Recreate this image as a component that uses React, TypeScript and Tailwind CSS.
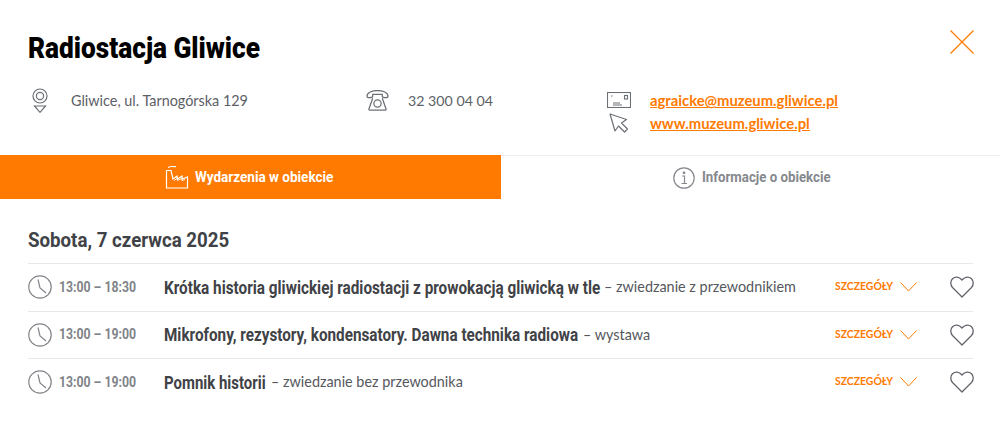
import React from "react";

const heading = "font-['Roboto',sans-serif] font-bold";
const body = "font-['Lato','Noto_Sans',sans-serif]";

const events = [
  { time: "13:00 – 18:30", title: "Krótka historia gliwickiej radiostacji z prowokacją gliwicką w tle", note: "– zwiedzanie z przewodnikiem", box: "w-[440px]", squeeze: "scale-x-[.85]" },
  { time: "13:00 – 19:00", title: "Mikrofony, rezystory, kondensatory. Dawna technika radiowa", note: "– wystawa", box: "w-[419px]", squeeze: "scale-x-[.848]" },
  { time: "13:00 – 19:00", title: "Pomnik historii", note: "– zwiedzanie bez przewodnika", box: "w-[107px]", squeeze: "scale-x-[.83]" },
];

const PinIcon = () => (
  <svg width="16" height="25" viewBox="0 0 16 25" fill="none" stroke="#6b6f76" strokeWidth="1.2">
    <circle cx="8" cy="8" r="7" />
    <circle cx="8" cy="8" r="3.6" />
    <path d="M2.500 18h11L8 24.300z" />
  </svg>
);

const PhoneIcon = () => (
  <svg width="23" height="21" viewBox="0 1.500 24 21.800" fill="none" stroke="#6b6f76" strokeWidth="1.3">
    <path d="M1 8c0-8 22-8 22 0 0 1-1 1.500-2.500 1.500S17 9 17 8V6H7v2c0 1-2 1.500-3.500 1.500S1 9 1 8z" />
    <path d="M7 10 3 21.500c0 .5.300 1 1 1h16c.7 0 1-.5 1-1L17 10" />
    <circle cx="12" cy="15.500" r="3.800" />
  </svg>
);

const MailIcon = () => (
  <svg width="24" height="16" viewBox="0 0 24 16" fill="none" stroke="#6b6f76" strokeWidth="1.1">
    <rect x=".5" y=".5" width="23" height="15" />
    <rect x="17.500" y="3.500" width="3" height="3.500" />
    <path d="M4 4h1.500M6 11h7M6 13h9" />
  </svg>
);

const CursorIcon = () => (
  <svg width="20" height="20" viewBox="0 0 20 20" fill="none" stroke="#6b6f76" strokeWidth="1.200">
    <path d="M1 1l5 17 3.500-5 6 6 3-3-6-6 5-3.500z" strokeLinejoin="round" />
  </svg>
);

const FactoryIcon = () => (
  <svg width="24" height="24" viewBox="0 0 24 24" fill="none" stroke="#fff" strokeWidth="1.200">
    <path d="M1.500 23V5.500h4.500l2 8.500 4-3 .5 3 4.500-3 .5 3 5-2V23z" />
    <path d="M3 2.500c3-1.800 5-.8 8-.8" />
    <path d="M9 15.500l3-2 .5 2 4-2 .5 2 3-1" strokeWidth=".9" />
  </svg>
);

const InfoIcon = () => (
  <svg width="22" height="22" viewBox="0 0 22 22" fill="none" stroke="#85888d" strokeWidth="1.200">
    <circle cx="11" cy="11" r="10.200" />
    <circle cx="11" cy="5.800" r=".8" fill="#85888d" />
    <path d="M9 9h2.500v7.500M8.500 16.500h5.500" />
  </svg>
);

const ClockIcon = () => (
  <svg width="24" height="24" viewBox="0 0 24 24" fill="none" stroke="#808388" strokeWidth="1.200">
    <circle cx="12" cy="12" r="11.200" />
    <path d="M10 4.500 12 13l6 5" />
  </svg>
);

const Chevron = () => (
  <svg width="17" height="10" viewBox="0 0 17 10" fill="none" stroke="#ff7a00" strokeWidth="1">
    <path d="M.5.500 8.500 9 16.500.5" />
  </svg>
);

const HeartIcon = () => (
  <svg width="24" height="22" viewBox="0 0 24 22" fill="none" stroke="#5f6369" strokeWidth="1.300">
    <path d="M12 21 2.500 11.500C.2 9 .2 5 2.500 2.800 5 .4 9 .4 12 4c3-3.600 7-3.600 9.500-1.200 2.300 2.200 2.300 6.200 0 8.700z" strokeLinejoin="round" />
  </svg>
);

const CloseIcon = () => (
  <svg width="24" height="24" viewBox="0 0 24 24" fill="none" stroke="#ff7a00" strokeWidth="1.200">
    <path d="M.5.500l23 23M23.500.500l-23 23" />
  </svg>
);

export default function App() {
  return (
    <main className={`w-[1000px] h-[448px] bg-white overflow-hidden ${body}`}>
      <header className="flex items-start justify-between pl-7 pr-[26px] pt-[30px] h-[70px]">
        <h1 className="text-[30px] leading-9 text-black whitespace-nowrap origin-left scale-x-[.875] font-['Roboto',sans-serif] font-black">Radiostacja Gliwice</h1>
        <button aria-label="Zamknij"><CloseIcon /></button>
      </header>

      <section className="flex pl-[31px] h-[85px] pt-[18px] text-[14.4px] text-[#5c6066]">
        <div className="flex items-start w-[335px]">
          <span className="ml-px"><PinIcon /></span>
          <span className="ml-[23px] pt-px leading-6">Gliwice, ul. Tarnogórska 129</span>
        </div>
        <div className="flex items-start w-[241px]">
          <span className="mt-[2px]"><PhoneIcon /></span>
          <span className="ml-[19px] pt-px text-[14.2px] leading-6">32 300 04 04</span>
        </div>
        <div className="flex flex-col text-[#ff7a00] text-[14.8px] underline font-bold">
          <a className="flex items-center h-6 gap-[19px]">
            <MailIcon />
            <span>agraicke@muzeum.gliwice.pl</span>
          </a>
          <a className="flex items-center h-[22px] gap-[19px]">
            <span className="w-6 flex justify-center"><CursorIcon /></span>
            <span>www.muzeum.gliwice.pl</span>
          </a>
        </div>
      </section>

      <nav className={`flex h-11 text-[15px] ${heading}`}>
        <div className="w-[501px] bg-[#ff7a00] text-white flex items-center pl-[165px] gap-[6px]">
          <FactoryIcon />
          <span className="whitespace-nowrap origin-left scale-x-[.9]">Wydarzenia w obiekcie</span>
        </div>
        <div className="flex-1 border-t border-[#eeeeee] text-[#85888d] flex items-center pl-[172px] gap-[7px]">
          <InfoIcon />
          <span className="whitespace-nowrap origin-left scale-x-[.883]">Informacje o obiekcie</span>
        </div>
      </nav>

      <section className="pl-7 pr-[27px]">
        <h2 className={`pt-[27px] pb-[9px] text-[21px] leading-7 text-[#3f4246] origin-left scale-x-[.89] ${heading}`}>Sobota, 7 czerwca 2025</h2>
        {events.map((item) => (
          <article key={item.title} className="flex items-center h-[47.5px] border-t border-[#e8e8e8]">
            <ClockIcon />
            <span className="ml-[7px] w-[105px]">
              <span className={`block text-[14px] text-[#808388] whitespace-nowrap origin-left scale-x-[.875] ${heading}`}>{item.time}</span>
            </span>
            <div className="flex-1 flex items-center">
              <span className={item.box}>
                <span className={`block text-[18px] text-[#3f4246] whitespace-nowrap origin-left ${item.squeeze} ${heading}`}>{item.title}</span>
              </span>
              <span className="text-[14.4px] text-[#55585d]">{item.note}</span>
            </div>
            <span className="text-[10.4px] font-bold text-[#ff7a00] mr-[7px]">SZCZEGÓŁY</span>
            <Chevron />
            <span className="ml-[33px] -mr-px"><HeartIcon /></span>
          </article>
        ))}
      </section>
    </main>
  );
}
